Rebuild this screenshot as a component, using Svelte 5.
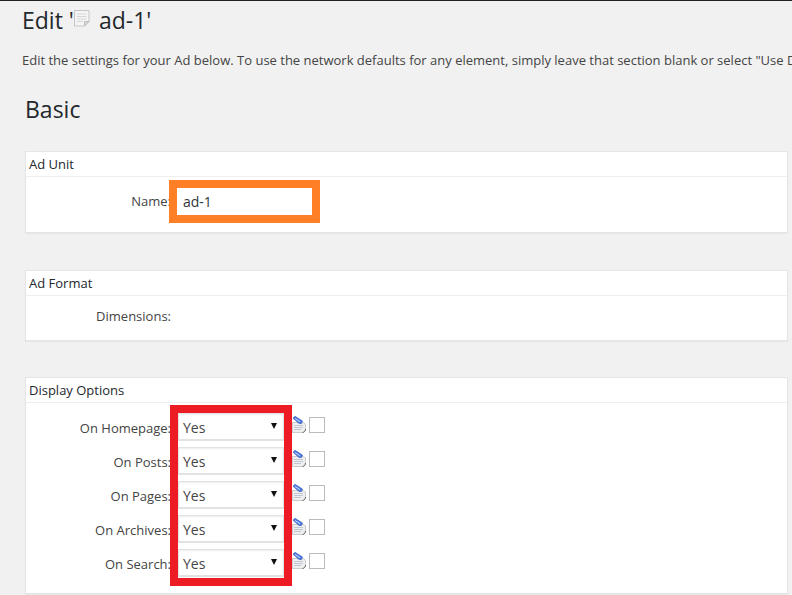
<script>
  let placements = [
    { label: 'On Homepage:' },
    { label: 'On Posts:' },
    { label: 'On Pages:' },
    { label: 'On Archives:' },
    { label: 'On Search:' }
  ];
</script>

<div class="page">
  <h1 class="title">
    Edit '<svg class="doc" viewBox="0 0 16 17" width="16" height="17">
      <path d="M.5 .5h14.500v11l-4.500 4.500h-10z" fill="#f5f5f5" stroke="#c4c4c4" />
      <path d="M10.500 16v-4.500h4.500z" fill="#dcdcdc" stroke="#bdbdbd" />
      <path d="M3 4h9.500M3 6.500h9.500M3 9h9.500M3 11.500h6" stroke="#d4d4d4" />
    </svg>
    <span class="name">ad-1'</span>
  </h1>

  <p class="intro">Edit the settings for your Ad below. To use the network defaults for any element, simply leave that section blank or select "Use Default".</p>

  <h2 class="section">Basic</h2>

  <section class="panel unit">
    <h3 class="panel-title">Ad Unit</h3>
    <div class="field">
      <span class="label name-label">Name:</span>
      <input class="name-input" type="text" value="ad-1" />
    </div>
  </section>

  <section class="panel format">
    <h3 class="panel-title">Ad Format</h3>
    <div class="field dims">
      <span class="label">Dimensions:</span>
    </div>
  </section>

  <section class="panel options">
    <h3 class="panel-title">Display Options</h3>
    <div class="opts">
      <div class="opt-labels">
        {#each placements as p}
          <span class="opt-label">{p.label}</span>
        {/each}
      </div>
      <div class="opt-selects">
        {#each placements as p}
          <div class="select">
            <span class="select-value">Yes</span>
            <i class="arrow"></i>
          </div>
        {/each}
      </div>
      <div class="opt-extras">
        {#each placements as p}
          <div class="extra">
            <svg class="note" viewBox="0 0 14 17" width="14" height="17">
              <path d="M.5 6.500h10.500l2.500 1.500v6l-2 2.500H.5z" fill="#efefef" stroke="#c0c0c0" stroke-width="0.8" />
              <path d="M10.500 16.500c2-.3 3-1.500 3-3.500" fill="none" stroke="#666" stroke-width="1" />
              <path d="M2 9.500h9M2 11.500h9M2 13.500h7" stroke="#b4bccb" stroke-width="0.8" />
              <path d="M1 2.200 3 .3l7.500 4.700-1 2.500h-2.500z" fill="#4a7de6" stroke="#3555ad" stroke-width="0.6" />
              <path d="M3 2.500 8 5.700" stroke="#dfeaff" stroke-width="0.9" />
            </svg>
            <span class="check"></span>
          </div>
        {/each}
      </div>
    </div>
  </section>
</div>

<style>
  :global(body) {
    margin: 0;
    background: #f1f1f1;
  }

  .page {
    height: 594px;
    width: 792px;
    border-top: 1px solid #222;
    overflow: hidden;
    font-family: "Open Sans", sans-serif;
    font-size: 13px;
    color: #444;
  }

  .title {
    display: flex;
    align-items: center;
    margin: 3px 0 0 22px;
    height: 32px;
    font-size: 23px;
    font-weight: 400;
    color: #23282d;
    white-space: pre;
  }

  .doc {
    margin: 0 0 3px 0;
  }

  .name {
    margin-left: 9px;
  }

  .intro {
    margin: 14px 0 0 22px;
    line-height: 20px;
    white-space: nowrap;
  }

  .section {
    margin: 21px 0 0 25px;
    height: 36px;
    line-height: 36px;
    font-size: 23px;
    font-weight: 400;
    color: #23282d;
  }

  .panel {
    width: 761px;
    margin-left: 25px;
    background: #fff;
    border: 1px solid #e5e5e5;
    box-shadow: 0 1px 1px rgba(0, 0, 0, 0.04);
  }

  .unit {
    margin-top: 24px;
    height: 80px;
  }

  .format {
    margin-top: 37px;
    height: 69px;
  }

  .options {
    margin-top: 36px;
    height: 215px;
  }

  .panel-title {
    margin: 0;
    height: 24px;
    padding-left: 3px;
    line-height: 24px;
    font-size: 13px;
    font-weight: 400;
    color: #23282d;
    border-bottom: 1px solid #eeeeee;
  }

  .field {
    display: flex;
    align-items: center;
  }

  .label {
    width: 145px;
    text-align: right;
  }

  .name-label {
    margin-top: 2px;
  }

  .name-input {
    box-sizing: border-box;
    width: 151px;
    height: 43px;
    margin: 3px 0 0 -2px;
    padding: 0 6px;
    border: 8px solid #ff7f27;
    background: #fff;
    font: 14px "Open Sans", sans-serif;
    color: #32373c;
    outline: none;
  }

  .dims {
    height: 40px;
  }

  .opts {
    display: flex;
    padding-top: 2px;
  }

  .opt-labels {
    display: flex;
    flex-direction: column;
    gap: 6px;
    width: 145px;
    margin-right: -1px;
    padding-top: 9px;
    text-align: right;
  }

  .opt-label {
    height: 28px;
    line-height: 28px;
  }

  .opt-selects {
    display: flex;
    flex-direction: column;
    gap: 6px;
    width: 106px;
    padding-bottom: 1px;
    border: 8px solid #ed1c24;
  }

  .select {
    display: flex;
    justify-content: space-between;
    align-items: center;
    box-sizing: border-box;
    height: 28px;
    padding: 0 6px 0 4px;
    background: #fff;
    border: 1px solid #e2e2e2;
    border-width: 1px 1px 2px;
    box-shadow: inset 0 1px 2px rgba(0, 0, 0, 0.07);
    font-size: 14px;
    color: #444;
  }

  .select-value {
    margin-top: 2px;
  }

  .arrow {
    margin-top: -2px;
    border: 3px solid transparent;
    border-width: 6px 3px 0;
    border-top-color: #111;
  }

  .opt-extras {
    display: flex;
    flex-direction: column;
    gap: 6px;
    padding-top: 8px;
  }

  .extra {
    display: flex;
    align-items: flex-start;
    height: 28px;
  }

  .note {
    margin: 3px 0 0 0;
  }

  .check {
    box-sizing: border-box;
    width: 16px;
    height: 16px;
    margin: 4px 0 0 3px;
    background: #fff;
    border: 1px solid #bbb;
  }
</style>
